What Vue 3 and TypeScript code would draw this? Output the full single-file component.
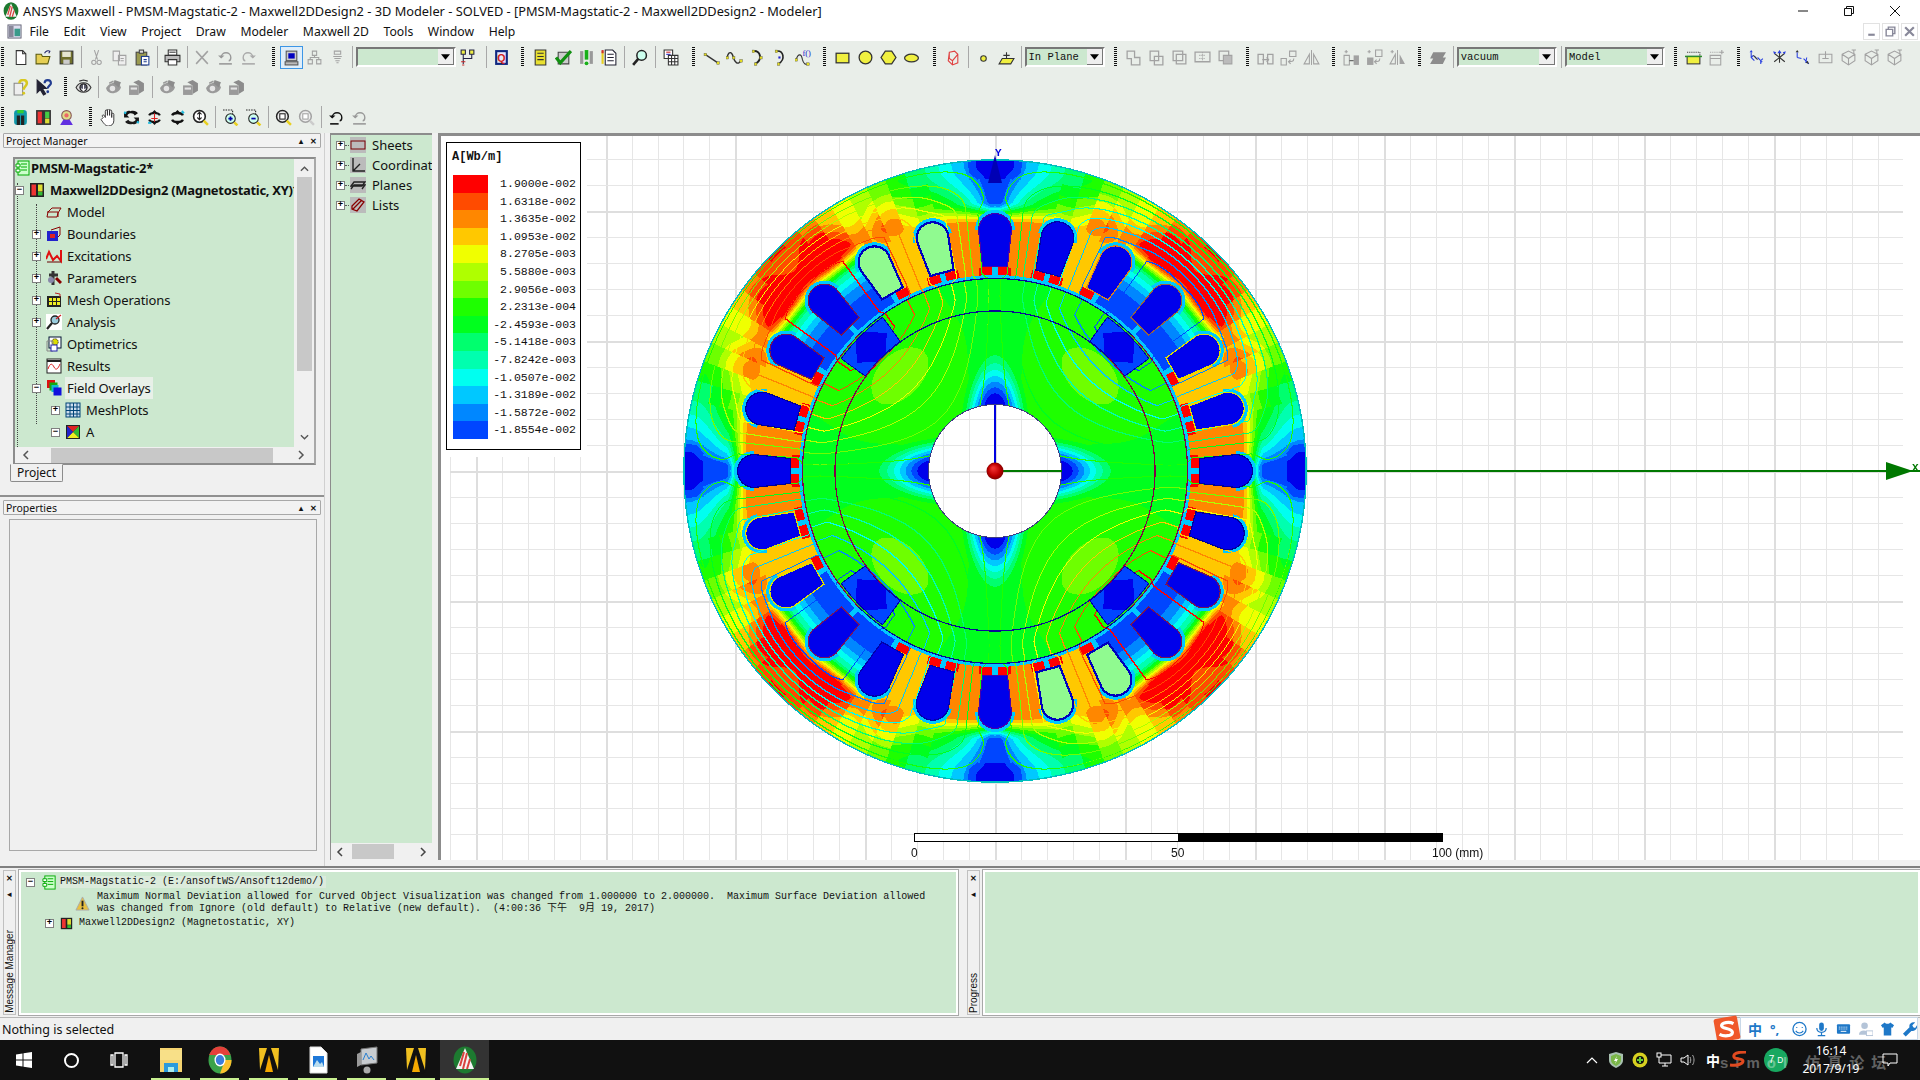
<script setup lang="ts">
import { onMounted, ref } from "vue";

const fieldEl = ref<HTMLCanvasElement | null>(null);

const g = "#a2a2a2";
const y = "#f0f040";
const pts = (list: number[][], c = "#e8e020") =>
  list.map(([a, b]) => `<rect x="${a - 1}" y="${b - 1}" width="2.4" height="2.4" fill="${c}" stroke="#554" stroke-width=".4"/>`).join("");

const icons: Record<string, string> = {
  new: `<path d="M4 1.5h6l3 3v10H4z" fill="#fff" stroke="#333"/><path d="M10 1.5v3h3" fill="none" stroke="#333"/>`,
  open: `<path d="M1 5h5l1 2h7l-2 7H1z" fill="#e6cf55" stroke="#5a5a10"/><path d="M9 4c1-2 3-3 5-2l-1 2" fill="none" stroke="#226"/>`,
  save: `<rect x="2" y="2" width="12" height="12" fill="#70702c" stroke="#333"/><rect x="4" y="2.5" width="8" height="5" fill="#e6e6d0"/><rect x="5" y="10" width="6" height="4" fill="#ccc"/>`,
  cut: `<path d="M6 1l3 9M10 1L7 10" stroke="${g}" fill="none"/><circle cx="5.5" cy="12.5" r="2" fill="none" stroke="${g}"/><circle cx="10.5" cy="12.5" r="2" fill="none" stroke="${g}"/>`,
  copy: `<path d="M2 2h6v9H2zM7 6h7v9H7z" fill="#eee" stroke="${g}"/><path d="M9 9h3M9 11h3" stroke="${g}"/>`,
  paste: `<rect x="2" y="3" width="10" height="12" fill="#9a9a50" stroke="#444"/><rect x="5" y="1" width="4" height="3" fill="#ddd" stroke="#444"/><rect x="7" y="7" width="7" height="8" fill="#fff" stroke="#1c3c90"/><path d="M9 10h3M9 12h3" stroke="#1c3c90"/>`,
  print: `<path d="M4 1h8v5H4z" fill="#fff" stroke="#333"/><path d="M1 6h14v6H1z" fill="#bbb" stroke="#333"/><path d="M4 10h8v5H4z" fill="#fff" stroke="#333"/><path d="M5 3h6" stroke="#333"/>`,
  del: `<path d="M2 2l11 12M13 2L2 14" stroke="${g}" stroke-width="1.4"/>`,
  undo: `<path d="M4 8c0-6 9-6 9 0 0 2-1 3-2 3" fill="none" stroke="#999" stroke-width="1.3"/><path d="M1 6l3 3 3-3" fill="#999"/><path d="M2 14h12" stroke="#999" stroke-width="1.5"/>`,
  redo: `<path d="M12 8c0-6-9-6-9 0 0 2 1 3 2 3" fill="none" stroke="#aaa" stroke-width="1.3"/><path d="M15 6l-3 3-3-3" fill="#aaa"/><path d="M2 14h12" stroke="#aaa" stroke-width="1.5"/>`,
  sel: `<rect x="3" y="2" width="10" height="9" fill="#ccc" stroke="#555"/><rect x="5" y="4" width="6" height="5" fill="#0000c0"/><rect x="2" y="12" width="12" height="3" fill="#bbb" stroke="#555"/>`,
  gtree: `<path d="M6 2h4v4H6zM2 10h4v4H2zM10 10h4v4h-4zM8 6v2M4 10V8h8v2" fill="none" stroke="${g}"/>`,
  gstack: `<path d="M5 2h6v3H5zM4 7h8M5 9h6M6 11h4M7 13h2" fill="none" stroke="${g}"/>`,
  netw: `<path d="M2 1h4v4H2zM10 1h4v4h-4z" fill="#ee4" stroke="#224"/><path d="M4 5v9M12 5v4H4" stroke="#224" fill="none"/><path d="M2 12h4M3 15h2" stroke="#c22"/>`,
  q: `<rect x="2" y="1" width="12" height="14" fill="#102880"/><rect x="4" y="3" width="8" height="10" fill="#e8e8ff"/><text x="8" y="12" font-size="10" font-family="Liberation Sans" font-weight="700" text-anchor="middle" fill="#d02020">Q</text>`,
  note: `<path d="M3 1h10v14H3z" fill="#e8e030" stroke="#333"/><path d="M5 4h6M5 7h6M5 10h6" stroke="#333"/>`,
  check: `<path d="M3 3h10v11H3z" fill="#ccc" stroke="#444"/><path d="M1 8l4 5L15 2" fill="none" stroke="#119011" stroke-width="3"/>`,
  excl: `<rect x="2" y="2" width="3" height="12" fill="#999"/><rect x="11" y="2" width="3" height="12" fill="#999"/><path d="M8 1v9" stroke="#18b018" stroke-width="3.4"/><circle cx="8" cy="13.5" r="1.8" fill="#18b018"/>`,
  doc: `<path d="M4 1h7l3 3v11H4z" fill="#fff" stroke="#223"/><path d="M6 5h6M6 8h6M6 11h6" stroke="#223"/><path d="M1.5 2v12" stroke="#e8d020" stroke-width="2"/><path d="M1.5 1v3" stroke="#d03030" stroke-width="2"/>`,
  scope: `<circle cx="10" cy="6" r="4.5" fill="#cfe" stroke="#222" stroke-width="1.4"/><path d="M7 9l-5 6" stroke="#222" stroke-width="2.4"/>`,
  tbl: `<path d="M2 1h8v8H2z" fill="#fff" stroke="#333"/><path d="M4 3h4" stroke="#c22"/><path d="M4 5h4" stroke="#22c"/><path d="M6 6h9v9H6zM6 9h9M6 12h9M9 6v9M12 6v9" fill="#fff" stroke="#333"/>`,
  help: `<path d="M2 4h8v11H2z" fill="#eee" stroke="#888"/><path d="M7 4c0-4 7-4 7 0 0 3-3 3-3 6" fill="none" stroke="#d8c820" stroke-width="2.4"/><circle cx="11" cy="13.5" r="1.4" fill="#d8c820"/>`,
  whatsthis: `<path d="M2 1v12l3-3 3 5 2-1-3-5h4z" fill="#223" stroke="#223"/><path d="M9 4c0-4 6-4 6 0 0 2-3 2-3 5" fill="none" stroke="#223c90" stroke-width="2"/><circle cx="12" cy="12" r="1.3" fill="#223c90"/>`,
  eye: `<path d="M1 8c3-6 11-6 14 0-3 6-11 6-14 0z" fill="#ddd" stroke="#333"/><circle cx="8" cy="8" r="3.4" fill="#556" stroke="#222"/><path d="M8 5.5V10M6 9l2 2 2-2" stroke="#fff" fill="none"/><path d="M4 2l4-1 4 1" stroke="#333" fill="none"/>`,
  geye: `<path d="M1 9c2-6 12-8 14-1-2 6-12 8-14 1z" fill="#9a9a9a"/><circle cx="7" cy="9" r="2.600" fill="#e4e4e4"/><path d="M9 1l6 2-2 5-5-4z" fill="#8c8c8c"/><path d="M4 4l4-2" stroke="#9a9a9a" stroke-width="1.500"/>`,
  gboxy: `<path d="M1 6h9v9H1z" fill="#9a9a9a"/><path d="M2.500 8h6v2h-6z" fill="#e4e4e4"/><path d="M5 3l5-2 5 3-5 2zM10 6l5-2v7l-5 3z" fill="#8c8c8c"/>`,
  view1: `<path d="M7 2c-2-1-4 0-5 2L1 3v5h5L4 6c2-3 6-2 7 0l3-2C13 2 10 1 7 2z" fill="#111"/><path d="M9 14c2 1 4 0 5-2l1 1V8h-5l2 2c-2 3-6 2-7 0l-3 2c1 2 4 3 7 2z" fill="#1a1a1a"/><path d="M1 3l2 1M15 13l-2-1" stroke="#2bd" stroke-width="2"/>`,
  view2: `<path d="M8 1l3 3H5zM8 15l3-3H5z" fill="#1a1a1a"/><path d="M3 6c1-3 9-3 10 0M3 10c1 3 9 3 10 0" fill="none" stroke="#111" stroke-width="2"/><path d="M8 4v8M5 9h6" stroke="#d22"/><path d="M2 13h3" stroke="#2bd" stroke-width="2"/>`,
  view3: `<path d="M8 1l3 3H5z" fill="#111"/><path d="M3 6c1-3 9-3 10 0M3 10c1 3 9 3 10 0" fill="none" stroke="#111" stroke-width="2.2"/><path d="M8 15l3-3H5z" fill="#111"/><path d="M12 2l2 2" stroke="#2bd" stroke-width="2"/>`,
  hand: `<path d="M3 8c-2-2 0-3 1-2l1 2V2c0-1.5 2-1.5 2 0v4-5c0-1.4 2-1.4 2 0v5-4c0-1.4 2-1.4 2 0v6-3c0-1.4 2-1.4 2 0v6c0 3-2 5-5 5s-4-2-7-6z" fill="#fff" stroke="#333" stroke-width=".9"/>`,
  zoomv: `<circle cx="7" cy="7" r="5.5" fill="#fff" stroke="#222" stroke-width="1.5"/><path d="M7 3v7M5 5l2-2 2 2M5 8l2 2 2-2" stroke="#222" fill="none"/><path d="M11 11l4 4" stroke="#e8d020" stroke-width="2.4"/>`,
  zin: `<path d="M1 1h9v7" fill="none" stroke="#222" stroke-dasharray="1.4 1"/><circle cx="8" cy="9" r="4.5" fill="#cfe" stroke="#222"/><path d="M6 9h4M8 7v4" stroke="#00a" stroke-width="1.6"/><path d="M11.5 12.5l3 3" stroke="#e8d020" stroke-width="2.4"/>`,
  zout: `<path d="M1 1h9v7" fill="none" stroke="#222" stroke-dasharray="1.4 1"/><circle cx="8" cy="9" r="4.5" fill="#cfe" stroke="#222"/><path d="M6 9h4" stroke="#00a" stroke-width="1.6"/><path d="M11.5 12.5l3 3" stroke="#e8d020" stroke-width="2.4"/>`,
  zfit: `<circle cx="7" cy="7" r="5.5" fill="#eee" stroke="#222" stroke-width="1.4"/><rect x="4.5" y="4.5" width="5" height="5" fill="#fff" stroke="#222"/><path d="M11 11l4 4" stroke="#e8d020" stroke-width="2.4"/>`,
  zgray: `<circle cx="7" cy="7" r="5.5" fill="#eee" stroke="${g}" stroke-width="1.4"/><rect x="4.5" y="4.5" width="5" height="5" fill="#fff" stroke="${g}"/><path d="M11 11l4 4" stroke="#ccc" stroke-width="2.4"/>`,
  undok: `<path d="M4 8c0-6 9-6 9 0 0 2-1 3-2 3" fill="none" stroke="#111" stroke-width="1.3"/><path d="M1 6l3 3 3-3" fill="#111"/><path d="M2 14h8" stroke="#111" stroke-width="1.5"/>`,
  bars: `<rect x="1" y="1" width="14" height="14" fill="#333"/><rect x="2.5" y="2.5" width="4" height="11" fill="#e33"/><rect x="9.5" y="2.5" width="4" height="6" fill="#4c4"/><rect x="9.5" y="9" width="4" height="4.5" fill="#dd3"/>`,
  field: `<rect x="2" y="1" width="12" height="14" rx="3" fill="#19a"/><path d="M6 15V6M10 15V6" stroke="#222" stroke-width="3"/><path d="M5 1h6v3H5z" fill="#3c3"/>`,
  lic: `<circle cx="8" cy="6" r="4.5" fill="#dd8" stroke="#855"/><circle cx="8" cy="6" r="2" fill="#e66"/><path d="M2 15l3-5h6l3 5z" fill="#6030e0"/>`,
  line: `<path d="M2 5l12 8" stroke="#333" stroke-width="1.3"/>${pts([[2, 5], [14, 13]])}`,
  spline: `<path d="M1 8c2-8 5-4 6 0s4 8 7 3" fill="none" stroke="#333" stroke-width="1.3"/>${pts([[1, 8], [7, 8], [14, 11]])}`,
  arc: `<path d="M4 2c7-1 9 8 2 12" fill="none" stroke="#222" stroke-width="1.8"/>${pts([[4, 2], [11, 8], [6, 14]])}`,
  arc2: `<path d="M4 2c7-1 9 8 2 12" fill="none" stroke="#222" stroke-width="1.5"/>${pts([[4, 2], [6, 14]])}<rect x="6" y="7" width="2" height="2" fill="#22c"/>`,
  func: `<path d="M1 10c2-6 5-6 6 0 1 4 3 5 5 4" fill="none" stroke="#333"/>${pts([[1, 10], [12, 14]])}<text x="11" y="7" font-size="8" font-family="Liberation Serif" text-anchor="middle" fill="#22c">f()</text>`,
  rect: `<rect x="2" y="4" width="12" height="9" fill="${y}" stroke="#333" stroke-width="1.2"/>`,
  circ: `<circle cx="8" cy="8" r="6" fill="${y}" stroke="#333" stroke-width="1.2"/>`,
  hex: `<path d="M5 2h6l4 6-4 6H5L1 8z" fill="${y}" stroke="#333" stroke-width="1.2"/>`,
  ell: `<ellipse cx="8" cy="8.5" rx="6.5" ry="3.6" fill="${y}" stroke="#333" stroke-width="1.2"/>`,
  wire: `<path d="M5 3l5-1 3 3v8l-5 2-4-4zM5 3v6l3 2 5-6M8 11v4" fill="none" stroke="#e04040"/>`,
  pt: `<circle cx="8" cy="9" r="2.6" fill="${y}" stroke="#333"/>`,
  plane: `<path d="M4 9h11l-3 5H1z" fill="${y}" stroke="#333"/><path d="M8 9V3M5 6h6" stroke="#333"/>`,
  gunite: `<path d="M2 2h7v6h5v7H6V9H2z" fill="none" stroke="${g}" stroke-width="1.2"/>`,
  gsub: `<path d="M2 2h8v9H2zM6 7h8v8H6z" fill="none" stroke="${g}" stroke-width="1.2"/>`,
  gint: `<path d="M2 2h9v9H2zM5 5h9v9H5z" fill="none" stroke="${g}" stroke-width="1.2"/>`,
  gsplit: `<path d="M1 3h14v9H1z" fill="none" stroke="${g}" stroke-width="1.2"/><path d="M8 3v9M5 6h6M5 9h6" stroke="${g}" stroke-dasharray="1 1"/>`,
  gimp: `<path d="M2 2h9v9H2z" fill="none" stroke="${g}" stroke-width="1.2"/><path d="M6 6h8v8H6z" fill="#bbb" stroke="${g}"/>`,
  gmove: `<path d="M1 5h5v9H1zM10 5h5v9h-5z" fill="none" stroke="${g}" stroke-width="1.2"/><path d="M5 10h6M9 8l2 2-2 2" stroke="${g}" fill="none"/>`,
  gdup: `<path d="M1 9h5v6H1z" fill="none" stroke="${g}"/><path d="M9 2h6v5H9z" fill="none" stroke="${g}"/><path d="M13 9c0 3-2 3-5 3M10 10l-2 2 2 2" fill="none" stroke="${g}"/>`,
  gmir: `<path d="M8 1v14" stroke="${g}"/><path d="M6 5v9H1z" fill="none" stroke="${g}"/><path d="M10 5v9h5z" fill="none" stroke="${g}"/>`,
  gmoveb: `<path d="M3 1v3M1.500 2.500h3" stroke="${g}"/><path d="M1 6h5v9H1z" fill="none" stroke="${g}"/><path d="M10 6h5v9h-5z" fill="${g}"/><path d="M6 11h4" stroke="#555"/>`,
  gdupb: `<path d="M3 1v3M1.500 2.500h3" stroke="${g}"/><rect x="1" y="8" width="6" height="7" fill="${g}"/><path d="M9 1h6v6H9z" fill="none" stroke="${g}"/><path d="M13 9c0 3-2 3-5 3M10 10l-2 2 2 2" fill="none" stroke="${g}"/>`,
  gmirb: `<path d="M3 1v3M1.500 2.500h3" stroke="${g}"/><path d="M8 1v14" stroke="${g}"/><path d="M6 5v9H1z" fill="none" stroke="${g}"/><path d="M10 5v9h5z" fill="${g}"/>`,
  gsheet: `<path d="M4 3h12l-3 5h3l-3 6H1l3-5H1z" fill="#8c8c8c"/>`,
  yelbox: `<path d="M2 3h12v3" fill="none" stroke="#333" stroke-dasharray="1 1"/><rect x="2" y="7" width="12" height="7" fill="${y}" stroke="#333"/><path d="M0 7h16" stroke="#2a8c2a" stroke-width="1.4"/>`,
  gbox: `<path d="M2 6h10v9H2z" fill="none" stroke="${g}"/><path d="M2 3h10" stroke="${g}" stroke-dasharray="1 1"/><path d="M13 1v4M11 3h4M2 9h10" stroke="${g}"/>`,
  ax1: `<path d="M3 3v5l3 3M9 8l3 3v3M3 8l2-2M12 11l2-2" stroke="#2a40e0" fill="none"/><path d="M3 1L1.500 3h3zM14 12l-2-1v2zM8 8l-2-2 1 3z" fill="#2a40e0"/><path d="M5 6l4 4" stroke="#333"/>`,
  ax2: `<path d="M8 3v10M3 4l10 8M13 4L3 12" stroke="#333"/><path d="M8 1L6 4h4zM14 2l-3 1 2 2zM2 2l3 1-2 2z" fill="#2a40e0"/>`,
  ax3: `<path d="M3 3v5M3 8l4 1M9 9l5 5M12 8l-1 5" stroke="#2a40e0" fill="none"/><path d="M3 1L1.500 3h3zM14 14l-3-1 2-2z" fill="#333"/>`,
  gbx: `<path d="M2 5h12v8H2z" fill="none" stroke="${g}"/><path d="M8 2v7M5 9h6" stroke="${g}"/>`,
  gax: `<path d="M2 5l6-3 6 3v6l-6 4-6-4zM2 5l6 4 6-4M8 9v6" fill="none" stroke="${g}"/><path d="M11 1h4M13 1v4" stroke="${g}"/>`,
};

const toolbars: (string | number)[][] = [
  ["|g", "new", "open", "save", "|", "cut", "copy", "paste", "|", "print", "|", "del", "undo", "redo", 11, "|g",
    "*sel", "gtree", "gstack", "|", "#100:", "netw", 3.5, "|", "q", 7, "|g", "note", "check", "excl", "doc", "|", "scope", 1, "|", "tbl", 9.5, "|g",
    "line", "spline", "arc", "arc2", "func", 7, "|g", "rect", "circ", "hex", "ell", 8.5, "|g", "wire", 1, "|", "pt", "plane", "|", "#80:In Plane", 8, "|g",
    "gunite", "gsub", "gint", "gsplit", "gimp", 8, "|g", "gmove", "gdup", "gmir", 8, "|g", "gmoveb", "gdupb", "gmirb", 8, "|g", "gsheet", 1.3, "|", "#100:vacuum", 1.2, "|", "#100:Model", 8, "|g",
    "yelbox", "gbox", 8, "|g", "ax1", "ax2", "ax3", "gbx", "gax", "gax", "gax"],
  ["|g", "help", "whatsthis", 8, "|g", "eye", "|", "geye", "gboxy", 1, "|", "geye", "gboxy", "geye", "gboxy"],
  ["|g", "field", "bars", "lic", 10, "|g", "hand", "view1", "view2", "view3", "zoomv", "|", "zin", "zout", "|", "zfit", "zgray", "|", "undok", "undo"],
];

interface TreeRow {
  text: string;
  pad: number;
  box?: "+" | "-";
  icon: string;
  bold?: boolean;
  sel?: boolean;
  root?: boolean;
}

const tico: Record<string, string> = {
  root: `<rect x="3" y="1" width="11" height="14" fill="#cfc" stroke="#0a0"/><path d="M1 4h4v3H1zM1 9h4v3H1z" fill="#fff" stroke="#0a0"/><path d="M6 4h6M6 7h6M6 10h6" stroke="#0a0"/>`,
  design: `<rect x="1" y="1" width="14" height="14" fill="#222"/><rect x="2.500" y="2.500" width="4.500" height="11" fill="#e33"/><rect x="9" y="2.500" width="4.500" height="7" fill="#dd3"/><rect x="9" y="10" width="4.500" height="3.500" fill="#3b3"/>`,
  model: `<path d="M2 8l4-4h9l-3 5-1 4H1z" fill="none" stroke="#800"/><path d="M1 8h11v5" fill="none" stroke="#800"/>`,
  bound: `<rect x="1" y="5" width="11" height="10" fill="#22c"/><rect x="4" y="8" width="5" height="4" fill="#d22"/><path d="M5 4l9-3v8l-2 2" fill="none" stroke="#800"/>`,
  exc: `<path d="M0 11l3-7 4 8 4-4 4 5V2" fill="none" stroke="#e01010" stroke-width="2"/><path d="M1 14h14" stroke="#600"/>`,
  param: `<path d="M7 1v14M3 5h9" stroke="#333" stroke-width="3"/><path d="M10 8l5 5" stroke="#800" stroke-width="3"/><circle cx="5" cy="10" r="3" fill="#88a"/>`,
  mesh: `<rect x="1" y="4" width="14" height="11" fill="#222"/><path d="M3 6h3v3H3zM7 6h3v3H7zM11 6h3v3h-3zM3 10h3v3H3zM7 10h3v3H7zM11 10h3v3h-3z" fill="#ee2"/><path d="M9 1l5 1v3" stroke="#b22" fill="none"/>`,
  analysis: `<rect width="16" height="16" fill="#fff"/><circle cx="9" cy="6" r="4" fill="#9cd" stroke="#222" stroke-width="1.3"/><path d="M6 9l-5 6" stroke="#222" stroke-width="2.2"/><path d="M10 5l5-4" stroke="#c22" stroke-width="1.2"/>`,
  opt: `<rect x="3" y="1" width="12" height="11" fill="#fff" stroke="#013"/><circle cx="9" cy="6" r="3.200" fill="#dd0" stroke="#333" stroke-dasharray="1 .6"/><path d="M1 5h6v10H1z" fill="none" stroke="#888"/><rect x="5" y="9" width="6" height="6" fill="#fff" stroke="#22a"/>`,
  res: `<rect x="1" y="1" width="14" height="14" fill="#fff" stroke="#222"/><path d="M1 3h14" stroke="#222" stroke-width="2"/><path d="M2 11c2-6 4-6 6-2s4 2 6-3" fill="none" stroke="#d22"/>`,
  over: `<rect x="1" y="0" width="8" height="8" fill="#d11"/><rect x="3.500" y="2.500" width="8" height="8" fill="#1a1"/><rect x="5.500" y="5" width="7" height="7" fill="#1bc"/><rect x="7.500" y="7.500" width="8" height="8" fill="#11d"/>`,
  mp: `<rect x="1" y="1" width="14" height="14" fill="#cde" stroke="#047"/><path d="M1 5h14M1 8.500h14M1 12h14M5 1v14M8.500 1v14M12 1v14" stroke="#047"/>`,
  a: `<rect x="1" y="1" width="14" height="14" fill="#222"/><path d="M2 2h12L8 8z" fill="#d22"/><path d="M14 2v12L8 8z" fill="#3b3"/><path d="M2 14h12L8 8z" fill="#ee2"/><path d="M2 2v12l6-6z" fill="#22c"/>`,
  hsheet: `<rect width="16" height="16" fill="#bbb"/><rect x="1" y="4" width="14" height="8" fill="none" stroke="#700"/>`,
  hcoord: `<rect width="16" height="16" fill="#bbb"/><path d="M3 1v13h12M3 14l7-7" fill="none" stroke="#222" stroke-width="1.4"/>`,
  hplane: `<rect width="16" height="16" fill="#bbb"/><path d="M1 9l3-4h11l-3 4zM1 12l3-4h11l-3 4" fill="none" stroke="#222" stroke-width="1.300"/>`,
  hlist: `<rect width="16" height="16" fill="#bbb"/><path d="M2 9l7-7 5 3-7 9-5-2zM3 12l9-9" fill="none" stroke="#800" stroke-width="1.300"/>`,
};

const treeRows: TreeRow[] = [
  { text: "PMSM-Magstatic-2*", pad: 0, icon: "root", bold: true, root: true },
  { text: "Maxwell2DDesign2 (Magnetostatic, XY)*", pad: 0, icon: "design", bold: true, box: "-" },
  { text: "Model", pad: 17, icon: "model" },
  { text: "Boundaries", pad: 17, icon: "bound", box: "+" },
  { text: "Excitations", pad: 17, icon: "exc", box: "+" },
  { text: "Parameters", pad: 17, icon: "param", box: "+" },
  { text: "Mesh Operations", pad: 17, icon: "mesh", box: "+" },
  { text: "Analysis", pad: 17, icon: "analysis", box: "+" },
  { text: "Optimetrics", pad: 17, icon: "opt" },
  { text: "Results", pad: 17, icon: "res" },
  { text: "Field Overlays", pad: 17, icon: "over", box: "-", sel: true },
  { text: "MeshPlots", pad: 36, icon: "mp", box: "+" },
  { text: "A", pad: 36, icon: "a", box: "-" },
];

const historyRows = [
  { text: "Sheets", icon: "hsheet" },
  { text: "Coordinate Systems", icon: "hcoord" },
  { text: "Planes", icon: "hplane" },
  { text: "Lists", icon: "hlist" },
];

const palette = [
  [0, 70, 255], [0, 135, 255], [0, 200, 255], [0, 255, 240], [0, 255, 175],
  [0, 255, 110], [0, 255, 30], [30, 255, 0], [110, 255, 0], [175, 255, 0],
  [240, 255, 0], [255, 200, 0], [255, 135, 0], [255, 75, 0], [255, 0, 0],
];
const rgb = (c: number[]) => `rgb(${c[0]},${c[1]},${c[2]})`;

const legendRows = [
  "1.9000e-002", "1.6318e-002", "1.3635e-002", "1.0953e-002", "8.2705e-003",
  "5.5880e-003", "2.9056e-003", "2.2313e-004", "-2.4593e-003", "-5.1418e-003",
  "-7.8242e-003", "-1.0507e-002", "-1.3189e-002", "-1.5872e-002", "-1.8554e-002",
].map((value, i) => ({ value, color: rgb(palette[14 - i]) }));

const outlines = [
  [0, 0, 150], [225, 225, 0], [225, 225, 0], [150, 100, 60], [220, 130, 30], [0, 0, 170],
  [70, 0, 170], [0, 0, 170], [0, 0, 170], [120, 20, 80], [120, 20, 80], [0, 0, 150],
  [0, 0, 150], [225, 225, 0], [225, 225, 0], [120, 20, 90], [0, 0, 170], [0, 0, 170],
  [70, 0, 170], [0, 0, 170], [0, 0, 170], [120, 20, 80], [120, 20, 80], [0, 0, 150],
];

const smooth = (a: number, b: number, t: number) => {
  const s = Math.max(0, Math.min(1, (t - a) / (b - a)));
  return s * s * (3 - 2 * s);
};

// cross-section of the machine, sampled pixel by pixel
function bakeField(): HTMLCanvasElement {
  const R = 311;
  const size = R * 2 + 6;
  const mid = size / 2;
  const off = document.createElement("canvas");
  off.width = size;
  off.height = size;
  const octx = off.getContext("2d")!;
  const img = octx.createImageData(size, size);
  const A = new Float32Array(size * size);
  const solid = new Uint8Array(size * size);
  const deg = Math.PI / 180;
  const step = Math.PI / 12;

  const put = (i: number, c: number[]) => {
    img.data[i * 4] = c[0];
    img.data[i * 4 + 1] = c[1];
    img.data[i * 4 + 2] = c[2];
    img.data[i * 4 + 3] = 255;
  };
  const paint = (i: number, v: number) => {
    if (v < 0.06) put(i, [0, 0, 235]);
    else put(i, palette[Math.max(0, Math.min(14, Math.floor(((v - 0.06) / 0.94) * 15)))]);
  };

  for (let py = 0; py < size; py++) {
    for (let px = 0; px < size; px++) {
      const x = px + 0.5 - mid;
      const yy = mid - py - 0.5;
      const r = Math.hypot(x, yy);
      const i = py * size + px;
      if (r > R + 0.8 || r < 66) continue;
      if (r > R - 0.6) { put(i, [0, 190, 190]); solid[i] = 1; continue; }
      if (r < 67) { put(i, [60, 60, 130]); solid[i] = 1; continue; }

      let th = Math.atan2(yy, x);
      if (th < 0) th += Math.PI * 2;
      const td = th / deg;
      const am = td % 90;
      const phi = Math.min(am, 90 - am);

      // slot nearest to this pixel
      const k = Math.round(th / step);
      const ang = k * step;
      const u = x * Math.cos(ang) + yy * Math.sin(ang);
      const w = -x * Math.sin(ang) + yy * Math.cos(ang);
      let sd: number;
      if (u < 241) sd = Math.min(13 + ((u - 204) * 4) / 37 - Math.abs(w), u - 204);
      else sd = 17 - Math.hypot(u - 241, w);
      const slot = ((k % 24) + 24) % 24;

      // flux function: lines of A
      const warp = smooth(190, 198, r) * (1 - smooth(256, 276, r)) * 0.8;
      const thw = th - (warp * Math.sin(24 * th)) / 24;
      let f: number;
      if (r < 175) f = (r / 175) ** 2;
      else if (r < 258) f = 1;
      else f = 1 - ((r - 258) / 53) ** 1.25;
      A[i] = -Math.sin(2 * thw) * f;

      if (sd > 0) {
        solid[i] = 1;
        const isGreen = slot === 7 || slot === 8 || slot === 19 || slot === 20;
        if (isGreen) put(i, sd < 2.2 ? [0, 0, 190] : [144, 250, 144]);
        else put(i, sd < 1.2 ? outlines[slot] : [0, 0, 235]);
        continue;
      }

      const pocket = r > 160 && r < 191 && 45 - phi < 9;
      if (pocket) {
        solid[i] = 1;
        const edge = Math.min(r - 160, 191 - r, (9 - (45 - phi)) * deg * r);
        if (edge < 1) put(i, [0, 0, 170]);
        else if (Math.abs(r - 175) + (45 - phi) * deg * 175 < 21) put(i, [0, 0, 235]);
        else paint(i, 0.08);
        continue;
      }

      let v: number;
      if (r < 192) {
        const s = (r - 67) / 58;
        const perp = r * Math.sin(phi * deg);
        const t = Math.max(0, 1 - Math.max(s, 0) ** 1.3 - (perp / 34) ** 2);
        v = 0.505;
        v -= 0.03 * Math.exp(-((phi / 14) ** 2));
        v += 0.095 * Math.exp(-(((r - 135) / 30) ** 2) - ((phi - 45) / 20) ** 2);
        v -= 0.5 * t ** 1.6;
      } else if (r < 196) {
        v = 0.22;
      } else {
        const facet = Math.round(td / 3.75) * 3.75;
        const fa = facet % 90;
        const fphi = Math.min(fa, 90 - fa);
        const phiq = fphi < 12 ? phi : fphi;
        const tooth = Math.floor(td / 15) * 15 + 7.5;
        const ta = tooth % 90;
        const pt = Math.min(ta, 90 - ta);
        const tip = r < 204 && Math.abs(w) < 16;
        if (tip) {
          if (Math.abs(w) < 2.6) v = 0.2;
          else v = pt < 30 ? 0.97 : 0.12;
        } else {
          const tv = pt < 10 ? 0.86 : pt < 30 ? 0.79 : 0.12 + 0.3 * smooth(218, 258, r);
          const edgeness = Math.max(0, (311 - r) / 53);
          const widen = 1 + edgeness ** 2 * Math.exp(-((phiq / 12) ** 2));
          const angle = Math.sin(Math.min(90, 2 * phiq * widen) * deg);
          const loss = 0.27 * smooth(262, 305, r) * (1 - 0.6 * smooth(25, 45, phiq));
          let yv = angle ** 0.9 * (1.05 - loss);
          yv += 0.07 * Math.cos(((td - 7.5) * 24 * Math.PI) / 180) * (1 - smooth(285, 311, r)) * smooth(10, 25, phiq);
          yv += 0.03 * Math.exp(-(((r - 280) / 14) ** 2) - ((phiq - 38) / 7) ** 2);
          if (r < 292) yv = Math.max(yv, 0.09);
          else if (phi < 5) yv -= 0.06 * smooth(285, 305, r);
          const mix = smooth(245, 270, r);
          v = tv * (1 - mix) + yv * mix;
          if (sd > -3 && u > 241 && r < 264) v = Math.min(v, 0.22);
        }
      }
      paint(i, v);
    }
  }

  // contour lines
  for (let py = 1; py < size - 1; py++) {
    for (let px = 1; px < size - 1; px++) {
      const i = py * size + px;
      const a = A[i];
      if (a === 0 || solid[i]) continue;
      const b = A[i + 1];
      const c = A[i + size];
      const l0 = Math.floor(a * 8 + 0.5);
      if ((b !== 0 && Math.floor(b * 8 + 0.5) !== l0) || (c !== 0 && Math.floor(c * 8 + 0.5) !== l0)) {
        const idx = Math.max(0, Math.min(14, Math.round((a + 1) * 7)));
        put(i, palette[idx]);
      }
    }
  }

  // rotor surface and magnet arc
  for (let py = 0; py < size; py++) {
    for (let px = 0; px < size; px++) {
      const x = px + 0.5 - mid;
      const yy = mid - py - 0.5;
      const r = Math.hypot(x, yy);
      const side = Math.abs(x) > Math.abs(yy);
      const onArc = Math.abs(r - 160) < 0.6 || Math.abs(r - 192.5) < 0.6;
      if (onArc) put(py * size + px, side ? [130, 0, 70] : [10, 10, 150]);
    }
  }
  octx.putImageData(img, 0, 0);
  return off;
}

function drawScene() {
  const el = fieldEl.value;
  if (!el) return;
  const ctx = el.getContext("2d")!;
  const W = el.width;
  const H = el.height;
  const cx = 554;
  const cy = 335;
  ctx.fillStyle = "#fff";
  ctx.fillRect(0, 0, W, H);

  const cell = 25.96;
  const gridLeft = 9;
  const gridRight = 1462;
  for (let i = -30; i < 60; i++) {
    const major = i % 5 === 0;
    ctx.fillStyle = major ? "#dedede" : "#e6e6e6";
    const gx = Math.round(cx + i * cell);
    const gy = Math.round(cy + i * cell);
    if (gx >= gridLeft && gx <= gridRight) ctx.fillRect(gx, 0, major ? 2 : 1, H);
    if (gy >= 0 && gy < H) ctx.fillRect(gridLeft, gy, gridRight - gridLeft, major ? 2 : 1);
  }

  // axes sit behind the plot except for the arrow tips
  ctx.fillStyle = "#007800";
  ctx.fillRect(cx, cy - 1, 1400, 2);

  ctx.drawImage(bakeField(), cx - 314, cy - 314);

  ctx.fillStyle = "#0000e0";
  ctx.fillRect(cx - 1, cy - 66, 2, 66);
  ctx.fillStyle = "#007800";
  ctx.fillRect(cx, cy - 1, 67, 2);

  ctx.fillStyle = "#0000b4";
  ctx.beginPath();
  ctx.moveTo(cx, cy - 316);
  ctx.lineTo(cx - 7, cy - 288);
  ctx.lineTo(cx + 7, cy - 288);
  ctx.fill();

  ctx.fillStyle = "#007800";
  ctx.beginPath();
  ctx.moveTo(1445, cy - 9);
  ctx.lineTo(1472, cy);
  ctx.lineTo(1445, cy + 9);
  ctx.fill();

  const ball = ctx.createRadialGradient(cx - 2, cy - 3, 1, cx, cy, 9);
  ball.addColorStop(0, "#f03030");
  ball.addColorStop(0.6, "#c00000");
  ball.addColorStop(1, "#7a0000");
  ctx.fillStyle = ball;
  ctx.beginPath();
  ctx.arc(cx, cy, 8.5, 0, Math.PI * 2);
  ctx.fill();
}

onMounted(drawScene);

const taskIcons = ["explorer", "chrome", "yellowa", "docb", "scopeapp", "yellowa", "maxwell"];
</script>

<template>
  <div class="screen">
    <header class="titlebar">
      <svg class="app-logo" viewBox="0 0 24 28"><ellipse cx="12" cy="14" rx="11.500" ry="13.500" fill="#1d7a30" /><path d="M12 2L3 23h18z" fill="#f4f4f4" /><path d="M11 6l-4 14M14 7L10 23M17 13l-3 10" stroke="#d9433f" stroke-width="2" /></svg>
      <span class="title-text">ANSYS Maxwell - PMSM-Magstatic-2 - Maxwell2DDesign2 - 3D Modeler - SOLVED - [PMSM-Magstatic-2 - Maxwell2DDesign2 - Modeler]</span>
      <div class="win-btns">
        <svg viewBox="0 0 12 12"><path d="M1 6h10" stroke="#111" /></svg>
        <svg viewBox="0 0 12 12"><path d="M1.500 3.500h7v7h-7zM3.500 3V1.500h7v7H9" fill="none" stroke="#111" /></svg>
        <svg viewBox="0 0 12 12"><path d="M1 1l10 10M11 1L1 11" stroke="#111" /></svg>
      </div>
    </header>

    <nav class="menubar">
      <svg class="menu-ico" viewBox="0 0 16 16"><rect x="1" y="1" width="14" height="14" fill="#dde" stroke="#667" /><rect x="2" y="2" width="5" height="12" fill="#889" /><rect x="8" y="5" width="6" height="8" fill="#3a9a8a" /></svg>
      <span v-for="m in ['File', 'Edit', 'View', 'Project', 'Draw', 'Modeler', 'Maxwell 2D', 'Tools', 'Window', 'Help']" :key="m">{{ m }}</span>
      <div class="mdi-btns">
        <i><svg viewBox="0 0 12 12"><path d="M3 9h6" stroke="#889" stroke-width="2" /></svg></i>
        <i><svg viewBox="0 0 12 12"><path d="M2 4h6v6H2zM4 4V2h6v6H8" fill="none" stroke="#889" stroke-width="1.300" /></svg></i>
        <i><svg viewBox="0 0 12 12"><path d="M2 2l8 8M10 2l-8 8" stroke="#889" stroke-width="2" /></svg></i>
      </div>
    </nav>

    <section class="toolbars">
      <div v-for="(bar, b) in toolbars" :key="b" class="toolbar">
        <template v-for="(item, i) in bar" :key="i">
          <span v-if="typeof item === 'number'" class="gap" :style="{ width: item + 'px' }" />
          <span v-else-if="item === '|g'" class="grip" />
          <span v-else-if="item === '|'" class="sep" />
          <span v-else-if="item[0] === '#'" class="combo" :style="{ width: item.slice(1).split(':')[0] + 'px' }">
            <b>{{ item.split(":")[1] }}</b>
            <em><svg viewBox="0 0 10 6"><path d="M0 0h10L5 6z" fill="#000" /></svg></em>
          </span>
          <span v-else class="tool" :class="{ active: item[0] === '*' }">
            <svg viewBox="0 0 16 16" v-html="icons[item.replace('*', '')]" />
          </span>
        </template>
      </div>
    </section>

    <main class="work">
      <aside class="left">
        <div class="dock-head"><span>Project Manager</span><small>▴</small><small>✕</small></div>
        <div class="tree-frame">
          <div class="tree-top">
            <div class="tree">
              <span class="guide" style="left: 2px" />
              <span class="guide inner" style="left: 21px" />
              <div
                v-for="row in treeRows"
                :key="row.text"
                class="row"
                :class="{ bold: row.bold, sel: row.sel, root: row.root }"
                :style="{ paddingLeft: row.pad + 'px' }"
              >
                <span class="twig"><i v-if="row.box" class="box">{{ row.box === "+" ? "+" : "−" }}</i></span>
                <svg class="row-ico" viewBox="0 0 16 16" v-html="tico[row.icon]" />
                <span class="row-text">{{ row.text }}</span>
              </div>
            </div>
            <div class="vscroll">
              <svg viewBox="0 0 10 8"><path d="M1 6l4-4 4 4" fill="none" stroke="#555" stroke-width="1.500" /></svg>
              <div class="vthumb" />
              <svg class="down" viewBox="0 0 10 8"><path d="M1 2l4 4 4-4" fill="none" stroke="#555" stroke-width="1.500" /></svg>
            </div>
          </div>
          <div class="hscroll">
            <svg viewBox="0 0 8 10"><path d="M6 1L2 5l4 4" fill="none" stroke="#555" stroke-width="1.500" /></svg>
            <div class="hthumb" />
            <svg viewBox="0 0 8 10"><path d="M2 1l4 4-4 4" fill="none" stroke="#555" stroke-width="1.500" /></svg>
          </div>
        </div>
        <div class="tab">Project</div>
        <div class="dock-rule" />
        <div class="dock-head"><span>Properties</span><small>▴</small><small>✕</small></div>
        <div class="props" />
      </aside>

      <aside class="history">
        <div class="hist-list">
          <div v-for="row in historyRows" :key="row.text" class="hist-row">
            <i class="box">+</i><span class="hist-dot" />
            <svg viewBox="0 0 16 16" v-html="tico[row.icon]" />
            <span class="hist-text">{{ row.text }}</span>
          </div>
        </div>
        <div class="hist-scroll">
          <svg viewBox="0 0 8 10"><path d="M6 1L2 5l4 4" fill="none" stroke="#444" stroke-width="1.500" /></svg>
          <div class="hist-thumb" />
          <svg viewBox="0 0 8 10"><path d="M2 1l4 4-4 4" fill="none" stroke="#444" stroke-width="1.500" /></svg>
        </div>
      </aside>

      <div class="viewport">
        <canvas ref="fieldEl" width="1479" height="724" />
        <div class="legend-mask">
          <div class="legend">
            <div class="legend-title">A[Wb/m]</div>
            <div v-for="l in legendRows" :key="l.value" class="legend-row">
              <span class="swatch" :style="{ background: l.color }" />
              <span class="legend-val">{{ l.value }}</span>
            </div>
          </div>
        </div>
        <span class="axis-y">Y</span>
        <span class="axis-x">X</span>
        <div class="ruler">
          <div class="ruler-bar"><span /></div>
          <div class="ruler-labels"><span>0</span><span>50</span><span>100 (mm)</span></div>
        </div>
      </div>
    </main>

    <section class="bottom">
      <div class="msg-panel">
        <div class="strip"><b>✕</b><small>◂</small><span>Message Manager</span></div>
        <div class="msg-body">
          <div class="msg-line project">
            <i class="box">−</i>
            <svg viewBox="0 0 16 16" v-html="tico.root" />
            <span>PMSM-Magstatic-2 (E:/ansoftWS/Ansoft12demo/)</span>
          </div>
          <div class="msg-warn">
            <svg viewBox="0 0 16 16"><path d="M8 1l7 14H1z" fill="#e8c040" stroke="#aaa" /><path d="M8 5v6" stroke="#222" stroke-width="2" /><circle cx="8" cy="13" r="1.100" fill="#222" /></svg>
            <p>Maximum Normal Deviation allowed for Curved Object Visualization was changed from 1.000000 to 2.000000.&nbsp; Maximum Surface Deviation allowed<br />was changed from Ignore (old default) to Relative (new default).&nbsp; (4:00:36 下午&nbsp; 9月 19, 2017)</p>
          </div>
          <div class="msg-line design">
            <i class="box">+</i>
            <svg viewBox="0 0 16 16" v-html="tico.design" />
            <span>Maxwell2DDesign2 (Magnetostatic, XY)</span>
          </div>
        </div>
      </div>
      <div class="prog-panel">
        <div class="strip"><b>✕</b><small>◂</small><span>Progress</span></div>
        <div class="prog-body" />
      </div>
    </section>

    <footer class="status">
      <span>Nothing is selected</span>
      <div class="ime">
        <svg class="ime-logo" viewBox="0 0 26 26"><rect x="2" y="2" width="22" height="22" rx="2" transform="rotate(-10 13 13)" fill="#f0582a" /><path d="M19 8c-4-2-11-1-11 2s10 2 10 6-8 4-12 2" fill="none" stroke="#fff" stroke-width="3" /></svg>
        <span class="ime-zh">中</span>
        <span class="ime-punct">°,</span>
        <svg viewBox="0 0 16 16"><circle cx="8" cy="8" r="7" fill="none" stroke="#1e78c8" stroke-width="1.400" /><path d="M5 6v1M11 6v1" stroke="#1e78c8" stroke-width="1.500" /><path d="M4 10c2 3 6 3 8 0" fill="none" stroke="#1e78c8" stroke-width="1.300" /></svg>
        <svg viewBox="0 0 16 16"><rect x="5.500" y="1" width="5" height="9" rx="2.500" fill="#1e78c8" /><path d="M3 7c0 6 10 6 10 0M8 12v3M4 15h8" fill="none" stroke="#1e78c8" stroke-width="1.300" /></svg>
        <svg viewBox="0 0 16 16"><rect x="1" y="3" width="14" height="10" rx="1" fill="#1e78c8" /><path d="M3 6h10M3 8h10" stroke="#fff" stroke-dasharray="1 1" /><path d="M5 10.500h6" stroke="#fff" /></svg>
        <svg viewBox="0 0 16 16"><circle cx="7" cy="4.500" r="3.500" fill="#b4c4d8" /><path d="M1 14c0-6 10-6 11 0z" fill="#b4c4d8" /><rect x="9" y="10" width="7" height="5" fill="#fff" stroke="#b4c4d8" /></svg>
        <svg viewBox="0 0 16 16"><path d="M5 1L1 4l2 3 1-1v9h8V6l1 1 2-3-4-3c-1 2-5 2-6 0z" fill="#1e78c8" /></svg>
        <svg viewBox="0 0 16 16"><path d="M1 13l7-7c-1-3 2-6 6-5l-3 3 1 2 2 1 2-3c1 4-3 7-6 6l-6 6z" fill="#1e78c8" /></svg>
      </div>
    </footer>

    <div class="taskbar">
      <svg class="win" viewBox="0 0 16 16"><path d="M0 2.500l6.500-1V7.500H0zM7.500 1.300L16 0v7.500H7.500zM0 8.500h6.500v6l-6.500-1zM7.500 8.500H16V16l-8.500-1.300z" fill="#fff" /></svg>
      <span class="cortana" />
      <svg class="tv" viewBox="0 0 18 16"><path d="M5 1h8v14H5zM1 3h2v10H1zM15 3h2v10h-2z" fill="none" stroke="#fff" stroke-width="1.300" /></svg>
      <div v-for="(t, i) in taskIcons" :key="i" class="task" :class="{ on: t === 'maxwell' }">
        <svg v-if="t === 'explorer'" viewBox="0 0 24 28"><path d="M1 2h22v24H1z" fill="#f4d470" /><rect x="1" y="4" width="22" height="10" fill="#f8e088" /><path d="M5 26v-9h14v9h-4v-5H9v5z" fill="#2a9adc" /><path d="M9 21h6v5H9z" fill="#aee" /></svg>
        <svg v-else-if="t === 'chrome'" viewBox="0 0 24 28"><ellipse cx="12" cy="14" rx="11.500" ry="13.500" fill="#3aa24a" /><path d="M12 .5A11.500 13.500 0 0 1 22.500 9H12z" fill="#e4403a" /><path d="M1 9A11.500 13.500 0 0 1 12 .5V9z" fill="#e4403a" /><path d="M23.500 14c0 8-5 13.500-11.500 13.500L17 14z" fill="#fbc02d" /><ellipse cx="12" cy="14" rx="5.500" ry="6.400" fill="#fff" /><ellipse cx="12" cy="14" rx="4.200" ry="5" fill="#3b7ddd" /></svg>
        <svg v-else-if="t === 'yellowa'" viewBox="0 0 24 28"><rect x="1" y="0" width="22" height="28" rx="6" fill="#101010" /><path d="M2 2h8L3 24z" fill="#f0c020" /><path d="M22 2h-8l7 22z" fill="#f0c020" /><path d="M12 9l4 17H8z" fill="#f4a800" /></svg>
        <svg v-else-if="t === 'docb'" viewBox="0 0 24 28"><path d="M4 1h11l6 6v20H4z" fill="#fff" stroke="#ddd" /><path d="M7 10h11v11H7z" fill="#1e78d8" /><path d="M7 21l4-7 3 4 2-2 2 5z" fill="#bde" /></svg>
        <svg v-else-if="t === 'scopeapp'" viewBox="0 0 24 28"><path d="M6 3l16-2v16l-16 2z" fill="#c8ccd0" stroke="#777" /><path d="M8 14l3-7 3 6 2-3 3 4" fill="none" stroke="#2a80d0" /><circle cx="12" cy="24" r="3.500" fill="#aaa" /><path d="M2 8l4-2v13l-4 2z" fill="#999" /></svg>
        <svg v-else viewBox="0 0 24 28"><ellipse cx="12" cy="14" rx="11.500" ry="13.500" fill="#1d7a30" /><path d="M12 2L3 23h18z" fill="#f4f4f4" /><path d="M11 6l-4 14M14 7L10 23M17 13l-3 10" stroke="#d9433f" stroke-width="2" /></svg>
      </div>
      <div class="tray">
        <svg class="t-chev" viewBox="0 0 12 8"><path d="M1 7l5-5 5 5" fill="none" stroke="#fff" stroke-width="1.200" /></svg>
        <svg class="t-sq" viewBox="0 0 16 16"><path d="M8 0l7 2v6c0 4-3 6-7 8-4-2-7-4-7-8V2z" fill="#a8c0b0" /><path d="M8 2l5 2v4c0 3-2 4-5 6-3-2-5-3-5-6V4z" fill="#7ab648" /><path d="M9 4L6 9h2l-1 3 3-5H8z" fill="#fff" /></svg>
        <svg class="t-sq" viewBox="0 0 16 16"><circle cx="8" cy="8" r="7.500" fill="#d8d020" /><circle cx="8" cy="8" r="4" fill="#111" /><path d="M8 5v6M5 8h6" stroke="#6c3" stroke-width="2" /></svg>
        <svg class="t-sq" viewBox="0 0 16 16"><path d="M3 3h12v8H3zM9 11v3M6 14h6" fill="none" stroke="#fff" /><rect x="1" y="1" width="4" height="4" fill="#111" stroke="#fff" /></svg>
        <svg class="t-sq" viewBox="0 0 16 16"><path d="M1 6h3l4-3v10L4 10H1z" fill="none" stroke="#fff" /><path d="M10 5c1 2 1 4 0 6M12.500 3c2 3 2 7 0 10" fill="none" stroke="#aaa" /></svg>
        <span class="t-zh">中</span>
      </div>
      <div class="green-dot">7 <small>D</small></div>
      <div class="clock"><span>16:14</span><span>2017/9/19</span></div>
      <svg class="note-ico" viewBox="0 0 16 16"><path d="M1 2h14v9H8l-2 3v-3H1z" fill="none" stroke="#fff" /></svg>
      <div class="mark"><svg viewBox="0 0 20 16"><path d="M18 1C8 1 5 3 6 6s9 1 9 4-6 5-13 4" fill="none" stroke="#e04a20" stroke-width="3" /></svg><span class="mark-text">simol 仿真论坛</span></div>
    </div>
  </div>
</template>

<style scoped>
.screen {
  width: 1920px;
  height: 1080px;
  overflow: hidden;
  background: #f0f0f0;
  display: flex;
  flex-direction: column;
  font-family: "Noto Sans", "Noto Sans CJK SC", sans-serif;
  color: #111;
}

.titlebar {
  height: 22px;
  flex: none;
  display: flex;
  align-items: center;
  background: #fff;
  font-size: 12.800px;
  padding-left: 3px;
}
.app-logo {
  width: 16px;
  height: 18px;
  margin-right: 4px;
}
.title-text {
  white-space: nowrap;
}
.win-btns {
  margin-left: auto;
  display: flex;
  gap: 34px;
  padding-right: 19px;
}
.win-btns svg {
  width: 12px;
  height: 12px;
}

.menubar {
  height: 19px;
  flex: none;
  display: flex;
  align-items: center;
  background: #fff;
  font-size: 12.200px;
  position: relative;
}
.menubar span {
  margin-right: 14.600px;
  white-space: nowrap;
}
.menu-ico {
  width: 15px;
  height: 15px;
  margin: 0 7.500px 0 7px;
}
.mdi-btns {
  margin-left: auto;
  display: flex;
  gap: 2px;
  padding-right: 2px;
}
.mdi-btns i {
  width: 17px;
  height: 17px;
  border: 1px solid #e2e2e2;
  background: #fff;
  display: block;
  box-sizing: border-box;
}
.mdi-btns svg {
  width: 13px;
  height: 13px;
  margin: 1px;
}

.toolbars {
  height: 92px;
  flex: none;
  background: #e9eee9;
  padding-top: 1px;
  box-sizing: border-box;
}
.toolbar {
  height: 30px;
  display: flex;
  align-items: center;
  font-family: "Liberation Mono", monospace;
}
.gap {
  flex: none;
}
.tool {
  width: 23px;
  height: 23px;
  flex: none;
  display: flex;
  align-items: center;
  justify-content: center;
  box-sizing: border-box;
}
.tool svg {
  width: 17px;
  height: 17px;
}
.tool.active {
  border: 1px solid #3c96e6;
  background: #dfeefa;
}
.grip {
  width: 9px;
  flex: none;
  height: 20px;
  background: repeating-linear-gradient(to bottom, #111 0 1px, transparent 1px 2px) 1px 0 / 3px 100% no-repeat;
}
.sep {
  width: 7px;
  height: 22px;
  flex: none;
  background: linear-gradient(#a8a8a8, #a8a8a8) 3px 0 / 1px 100% no-repeat;
}
.combo {
  flex: none;
  height: 20px;
  box-sizing: border-box;
  border: 2px solid;
  border-color: #777 #fff #fff #777;
  background: #cce8cf;
  display: flex;
  align-items: center;
  justify-content: space-between;
  font-size: 10.500px;
}
.combo b {
  font-weight: 400;
  padding-left: 2px;
}
.combo em {
  width: 16px;
  height: 16px;
  background: #eee;
  border-right: 1px solid #777;
  border-bottom: 1px solid #777;
  display: flex;
  align-items: center;
  justify-content: center;
  box-sizing: border-box;
}
.combo em svg {
  width: 9px;
  height: 6px;
}

.work {
  height: 733px;
  flex: none;
  display: flex;
  background: #f0f0f0;
}
.left {
  width: 325px;
  flex: none;
  box-sizing: border-box;
  padding-left: 3px;
  border-right: 1px solid #d0d0d0;
}
.dock-head {
  width: 318px;
  height: 15px;
  border: 1px solid #a8a8a8;
  border-radius: 1px;
  box-sizing: border-box;
  display: flex;
  align-items: center;
  font-size: 10.500px;
  padding-left: 2px;
  background: #f2f2f2;
  position: relative;
}
.dock-head span {
  flex: 1;
  white-space: nowrap;
}
.dock-head small {
  font-size: 8px;
  width: 13px;
  text-align: center;
  font-weight: 700;
}
.tree-frame {
  margin: 9px 0 0 10px;
  width: 303px;
  height: 308px;
  border: 2px solid #8c8c8c;
  border-color: #8c8c8c #a8a8a8 #8c8c8c #8c8c8c;
  box-sizing: border-box;
  display: flex;
  flex-direction: column;
  background: #f0f0f0;
}
.tree-top {
  height: 288px;
  display: flex;
}
.tree {
  width: 279px;
  height: 288px;
  flex: none;
  background: #cce8cf;
  overflow: hidden;
  position: relative;
  font-size: 13px;
  letter-spacing: -0.100px;
}
.guide {
  position: absolute;
  top: 24px;
  height: 264px;
  border-left: 1px dotted #444;
}
.guide.inner {
  top: 45px;
  height: 220px;
}
.row {
  height: 22px;
  display: flex;
  align-items: center;
  white-space: nowrap;
  box-sizing: border-box;
  position: relative;
}
.row:first-of-type {
  margin-top: -2px;
}
.row.bold {
  font-weight: 700;
  font-size: 13px;
  letter-spacing: -0.300px;
}
.row.sel .row-text {
  background: #e8f0e8;
  outline: 2px solid #e8f0e8;
}
.twig {
  width: 14px;
  flex: none;
  display: block;
}
.row.root .twig {
  width: 0;
}
.row.root .row-ico {
  margin-right: 0;
}
.box {
  width: 9px;
  height: 9px;
  box-sizing: border-box;
  border: 1px solid #808080;
  background: #fff;
  display: flex;
  align-items: center;
  justify-content: center;
  font: 700 9px/1 "Liberation Mono", monospace;
  font-style: normal;
  color: #000;
  flex: none;
  letter-spacing: 0;
}
.row-ico {
  width: 16px;
  height: 16px;
  flex: none;
  margin-right: 5px;
}
.vscroll {
  width: 20px;
  display: flex;
  flex-direction: column;
  align-items: center;
  background: #f0f0f0;
  position: relative;
}
.vscroll svg {
  width: 9px;
  height: 8px;
  margin: 6px 0;
}
.vscroll .down {
  position: absolute;
  bottom: 0;
}
.vthumb {
  width: 15px;
  height: 194px;
  background: #c8c8c8;
  margin-top: -2px;
}
.hscroll {
  height: 16px;
  display: flex;
  align-items: center;
  padding: 0 7px;
  gap: 0;
}
.hscroll svg {
  width: 8px;
  height: 10px;
  flex: none;
}
.hthumb {
  width: 222px;
  height: 15px;
  background: #c8c8c8;
  margin: 0 24px 0 21px;
}
.tab {
  margin: -1px 0 0 7px;
  width: 53px;
  height: 18px;
  border: 1px solid #8c8c8c;
  border-top: 1px solid #f0f0f0;
  border-radius: 0 0 2px 2px;
  box-sizing: border-box;
  font-size: 12px;
  padding-left: 6px;
  line-height: 16px;
}
.dock-rule {
  height: 2px;
  margin: 13px 0 3px -3px;
  background: #909090;
}
.props {
  margin: 4px 0 0 6px;
  width: 308px;
  height: 332px;
  border: 1px solid #a8a8a8;
  background: #f0f0f0;
  box-sizing: border-box;
}

.history {
  width: 102px;
  height: 727px;
  margin-left: 5px;
  flex: none;
  display: flex;
  flex-direction: column;
  border-top: 2px solid #8c8c8c;
  border-left: 1px solid #8c8c8c;
  box-sizing: border-box;
  background: #f0f0f0;
}
.hist-list {
  flex: 1;
  background: #cce8cf;
  overflow: hidden;
}
.hist-row {
  height: 20px;
  display: flex;
  align-items: center;
  padding-left: 5px;
  font-size: 13px;
  white-space: nowrap;
}
.hist-dot {
  width: 6px;
  border-top: 1px dotted #555;
  flex: none;
  margin-right: -1px;
}
.hist-row svg {
  width: 16px;
  height: 16px;
  flex: none;
  margin-right: 6px;
}
.hist-scroll {
  height: 17px;
  display: flex;
  align-items: center;
  padding: 0 5px;
  justify-content: space-between;
}
.hist-scroll svg {
  width: 8px;
  height: 10px;
}
.hist-thumb {
  width: 42px;
  height: 15px;
  background: #c8c8c8;
  margin-left: 8px;
  margin-right: auto;
}

.viewport {
  margin-left: 6px;
  width: 1482px;
  height: 727px;
  flex: none;
  position: relative;
  border-top: 3px solid #8c8c8c;
  border-left: 3px solid #8c8c8c;
  box-sizing: border-box;
  background: #fff;
}
canvas {
  display: block;
}
.legend-mask {
  position: absolute;
  left: 0;
  top: 0;
  width: 146px;
  height: 321px;
  background: #fff;
  padding: 6px 0 0 5px;
  box-sizing: border-box;
}
.legend {
  width: 135px;
  height: 308px;
  border: 1px solid #000;
  box-sizing: border-box;
  padding: 7px 0 0 5px;
  font-family: "Liberation Mono", monospace;
}
.legend-title {
  font-size: 12px;
  font-weight: 700;
  height: 25px;
  line-height: 15px;
}
.legend-row {
  height: 17.600px;
  display: flex;
  align-items: center;
  font-size: 11.500px;
  line-height: 1;
}
.swatch {
  width: 35px;
  height: 17.600px;
  margin-left: 1px;
  flex: none;
}
.legend-val {
  margin-left: auto;
  padding-right: 4px;
  white-space: pre;
}
.axis-y,
.axis-x {
  position: absolute;
  font: 700 11px/12px "Liberation Mono", monospace;
}
.axis-y {
  left: 554px;
  top: 11px;
  color: #0000e0;
}
.axis-x {
  left: 1471px;
  top: 326px;
  color: #007800;
}
.ruler {
  position: absolute;
  left: 473px;
  top: 697px;
  width: 529px;
}
.ruler-bar {
  height: 9px;
  background: #000;
  border: 1px solid #000;
  box-sizing: border-box;
  display: flex;
}
.ruler-bar span {
  width: 263px;
  background: #fff;
}
.ruler-labels {
  height: 14px;
  position: relative;
  font: 12px/14px "Liberation Sans", sans-serif;
  margin-top: 4px;
  display: flex;
}
.ruler-labels span {
  flex: none;
  white-space: nowrap;
}
.ruler-labels span:nth-child(1) {
  width: 260px;
  margin-left: -3px;
}
.ruler-labels span:nth-child(2) {
  width: 261px;
}

.bottom {
  height: 151px;
  flex: none;
  display: flex;
  border-top: 2px solid #808080;
  padding-top: 2px;
  box-sizing: border-box;
  background: #f0f0f0;
}
.msg-panel {
  width: 958px;
  display: flex;
  padding-left: 3px;
  box-sizing: border-box;
  height: 145px;
}
.prog-panel {
  margin-left: 9px;
  flex: 1;
  display: flex;
  height: 145px;
}
.strip {
  width: 13px;
  flex: none;
  border: 1px solid #c0c0c0;
  box-sizing: border-box;
  position: relative;
  font-size: 9px;
  text-align: center;
  line-height: 1;
  margin-right: 3px;
}
.strip b {
  display: block;
  margin-top: 3px;
  font-size: 8px;
}
.strip small {
  display: block;
  margin-top: 7px;
  font-size: 9px;
}
.strip span {
  position: absolute;
  left: 0;
  bottom: 1px;
  width: 11px;
  writing-mode: vertical-rl;
  transform: rotate(180deg);
  font: 10px/11px "Liberation Sans", sans-serif;
  white-space: nowrap;
}
.msg-body,
.prog-body {
  flex: 1;
  background: #cce8cf;
  border: 2px solid #fff;
  outline: 1px solid #a8a8a8;
  position: relative;
  font: 10px/12px "Liberation Mono", "Noto Sans CJK SC", monospace;
}
.msg-body {
  padding: 2px 0 0 5px;
  box-sizing: border-box;
}
.msg-line {
  display: flex;
  align-items: center;
  height: 16px;
  white-space: nowrap;
}
.msg-line svg {
  width: 15px;
  height: 15px;
  margin: 0 3px 0 7px;
  flex: none;
}
.msg-line.project span {
  background: #dcebdc;
  padding-right: 2px;
}
.msg-line.design {
  padding-left: 19px;
}
.msg-line.design svg {
  margin: 0 6px 0 6px;
  width: 13px;
}
.msg-warn {
  display: flex;
  align-items: center;
  padding-left: 49px;
  height: 24px;
  margin-top: 1px;
}
.msg-warn svg {
  width: 15px;
  height: 15px;
  flex: none;
  margin-right: 7px;
}
.msg-warn p {
  margin: 0;
  white-space: nowrap;
}

.status {
  height: 23px;
  flex: none;
  background: #f0f0f0;
  border-top: 1px solid #b8b8b8;
  box-sizing: border-box;
  display: flex;
  align-items: center;
  font-size: 12.500px;
  padding-left: 2px;
  position: relative;
}
.ime {
  position: absolute;
  right: 2px;
  top: -1px;
  width: 178px;
  height: 23px;
  background: #fff;
  border: 1px solid #c8d8e8;
  box-sizing: border-box;
  display: flex;
  align-items: center;
  gap: 7px;
  padding-left: 7px;
}
.ime svg {
  width: 15px;
  height: 16px;
  flex: none;
}
.ime .ime-logo {
  position: absolute;
  left: -28px;
  top: -3px;
  width: 28px;
  height: 28px;
}
.ime-zh {
  color: #1e78c8;
  font-size: 14px;
  font-weight: 700;
  width: 15px;
}
.ime-punct {
  color: #1e78c8;
  font-size: 13px;
  font-weight: 700;
  width: 15px;
}

.taskbar {
  height: 40px;
  flex: none;
  background: #111;
  display: flex;
  align-items: center;
  position: relative;
  color: #fff;
}
.win {
  width: 16px;
  height: 16px;
  margin-left: 16px;
}
.cortana {
  width: 15px;
  height: 15px;
  border: 2px solid #fff;
  border-radius: 50%;
  box-sizing: border-box;
  margin-left: 32px;
}
.tv {
  width: 18px;
  height: 16px;
  margin-left: 31px;
  margin-right: 18px;
}
.task {
  width: 49px;
  height: 40px;
  display: flex;
  align-items: center;
  justify-content: center;
  box-sizing: border-box;
  position: relative;
  flex: none;
}
.task::after {
  content: "";
  position: absolute;
  left: 5px;
  right: 5px;
  bottom: 0;
  height: 2px;
  background: #c8f090;
}
.task.on {
  background: #333;
}
.task.on::after {
  left: 0;
  right: 0;
}
.task svg {
  width: 24px;
  height: 28px;
}
.tray {
  position: absolute;
  left: 1586px;
  top: 0;
  height: 40px;
  display: flex;
  align-items: center;
}
.t-chev {
  width: 12px;
  height: 8px;
  margin-right: 10px;
}
.t-sq {
  width: 16px;
  height: 16px;
  margin-right: 8px;
}
.t-zh {
  font-size: 14px;
  font-weight: 700;
  margin-left: 2px;
}
.mark {
  position: absolute;
  left: 1720px;
  top: 11px;
  width: 190px;
  height: 18px;
}
.mark svg {
  position: absolute;
  left: 8px;
  top: 0;
  width: 20px;
  height: 16px;
}
.mark-text {
  font: 700 15px/18px "Liberation Sans", "Noto Sans CJK SC", sans-serif;
  color: rgba(255, 255, 255, 0.35);
  letter-spacing: 7px;
  white-space: nowrap;
}
.green-dot {
  position: absolute;
  left: 1764px;
  top: 8px;
  width: 24px;
  height: 24px;
  border-radius: 50%;
  background: #18a860;
  font: 10px/24px "Liberation Sans", sans-serif;
  text-align: center;
}
.clock {
  position: absolute;
  left: 1796px;
  top: 0;
  width: 70px;
  height: 40px;
  display: flex;
  flex-direction: column;
  align-items: center;
  justify-content: center;
  font-size: 12px;
  line-height: 18px;
}
.note-ico {
  position: absolute;
  left: 1882px;
  top: 12px;
  width: 16px;
  height: 16px;
}
</style>

<style>
html,
body {
  margin: 0;
  background: #f0f0f0;
}
</style>
